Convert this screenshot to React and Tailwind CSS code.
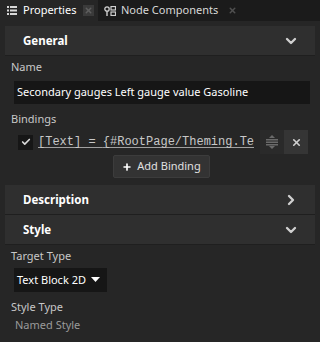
import { ChevronDown, ChevronRight, X, Check, Plus } from 'lucide-react'

function SectionHeader({ title, open }) {
  return (
    <div className="mx-[5px] h-[30px] bg-[#2f2f2f] flex items-center justify-between pl-[18px] pr-[16px] border-b border-[#1f1f1f]">
      <span className="text-[11.5px] font-bold text-white">{title}</span>
      {open ? (
        <ChevronDown className="w-4 h-4 text-[#d0d0d0]" strokeWidth={3.5} />
      ) : (
        <ChevronRight className="w-4 h-4 text-[#d0d0d0]" strokeWidth={3.5} />
      )}
    </div>
  )
}

function Label({ children }) {
  return <p className="text-[11px] text-[#c8c8c8] px-[11px] leading-4">{children}</p>
}

export default function App() {
  return (
    <div className="w-[320px] h-[342px] bg-[#262626] overflow-hidden" style={{ fontFamily: '"Noto Sans", "Open Sans", sans-serif' }}>
      {/* tabs */}
      <div className="h-[21px] bg-[#1b1b1b] flex items-stretch">
        <div className="bg-[#262626] flex items-center pl-[7px] pr-[4px] w-[98px]">
          <svg width="10" height="9" viewBox="0 0 10 9" className="mr-[6px]">
            <rect x="0" y="0" width="2" height="2" fill="#d8d8d8" />
            <rect x="3" y="0" width="7" height="2" fill="#d8d8d8" />
            <rect x="0" y="3.5" width="2" height="2" fill="#d8d8d8" />
            <rect x="3" y="3.5" width="7" height="2" fill="#d8d8d8" />
            <rect x="0" y="7" width="2" height="2" fill="#d8d8d8" />
            <rect x="3" y="7" width="7" height="2" fill="#d8d8d8" />
          </svg>
          <span className="text-[11px] text-white">Properties</span>
          <span className="ml-auto w-[11px] h-[11px] bg-[#3a3a3a] flex items-center justify-center">
            <X className="w-[9px] h-[9px] text-[#5e5e5e]" strokeWidth={4} />
          </span>
        </div>
        <div className="flex items-center pl-[6px]">
          <svg width="12" height="10" viewBox="0 0 12 10" className="mr-[5px]">
            <circle cx="3" cy="3" r="2.2" fill="none" stroke="#d0d0d0" strokeWidth="1.3" />
            <rect x="2.3" y="5" width="1.4" height="5" fill="#d0d0d0" />
            <rect x="7" y="0.5" width="4.5" height="3.5" fill="none" stroke="#d0d0d0" strokeWidth="1.2" />
            <rect x="7" y="6" width="4.5" height="3.5" fill="none" stroke="#d0d0d0" strokeWidth="1.2" />
          </svg>
          <span className="text-[11px] text-[#d8d8d8]">Node Components</span>
          <X className="w-[9px] h-[9px] text-[#505050] ml-[10px]" strokeWidth={4} />
        </div>
      </div>

      <div className="pt-[5px]">
        <SectionHeader title="General" open />

        <div className="pt-[3px]">
          <Label>Name</Label>
          <div className="ml-[14px] mr-[10px] mt-[6px] h-[23px] bg-[#161616] flex items-center px-[3px]">
            <span className="text-[11px] text-white">Secondary gauges Left gauge value Gasoline</span>
          </div>

          <div className="mt-[7px]">
            <Label>Bindings</Label>
          </div>
          <div className="flex items-center mt-[3px] pl-[18px] pr-[10px] h-[24px]">
            <span className="w-[15px] h-[15px] bg-[#161616] flex items-center justify-center">
              <Check className="w-[10px] h-[10px] text-[#d8d8d8]" strokeWidth={4} />
            </span>
            <span
              className="ml-[5px] text-[12px] text-[#c8c8c8] underline underline-offset-2 decoration-[#a0a0a0] whitespace-nowrap overflow-hidden w-[216px]"
              style={{ fontFamily: '"Liberation Mono", monospace' }}
            >
              [Text] = {'{'}#RootPage/Theming.Te
            </span>
            <span className="w-[24px] h-[24px] ml-[6px] bg-[#2a2a2a] flex items-center justify-center">
              <svg width="12" height="14" viewBox="0 0 12 14">
                <polygon points="6,0 9,3 3,3" fill="#6a6a6a" />
                <rect x="0" y="4" width="12" height="1.5" fill="#6a6a6a" />
                <rect x="0" y="6.5" width="12" height="1.5" fill="#6a6a6a" />
                <rect x="0" y="9" width="12" height="1.5" fill="#6a6a6a" />
                <polygon points="3,11 9,11 6,14" fill="#6a6a6a" />
              </svg>
            </span>
            <span className="w-[24px] h-[24px] bg-[#353535] flex items-center justify-center">
              <X className="w-[11px] h-[11px] text-[#d0d0d0]" strokeWidth={3.5} />
            </span>
          </div>
          <div className="flex justify-center mt-[1px] pl-[3px]">
            <div className="h-[23px] px-[8px] bg-[#333333] border border-[#3c3c3c] rounded-[2px] flex items-center gap-[5px]">
              <Plus className="w-[10px] h-[10px] text-white" strokeWidth={4} />
              <span className="text-[11px] text-[#e0e0e0]">Add Binding</span>
            </div>
          </div>
        </div>

        <div className="mt-[7px]">
          <SectionHeader title="Description" />
          <SectionHeader title="Style" open />
        </div>

        <div className="pt-[3px]">
          <Label>Target Type</Label>
          <div className="mx-[14px] mt-[4px] h-[24px] w-[93px] bg-[#161616] flex items-center px-[3px] gap-[5px] whitespace-nowrap">
            <span className="text-[11px] text-white">Text Block 2D</span>
            <svg width="9" height="6" viewBox="0 0 9 6">
              <polygon points="0,0 9,0 4.5,5" fill="#ffffff" />
            </svg>
          </div>
          <div className="mt-[7px]">
            <Label>Style Type</Label>
          </div>
          <p className="text-[11px] text-[#9a9a9a] px-[15px] mt-[2px]">Named Style</p>
        </div>
      </div>
    </div>
  )
}
